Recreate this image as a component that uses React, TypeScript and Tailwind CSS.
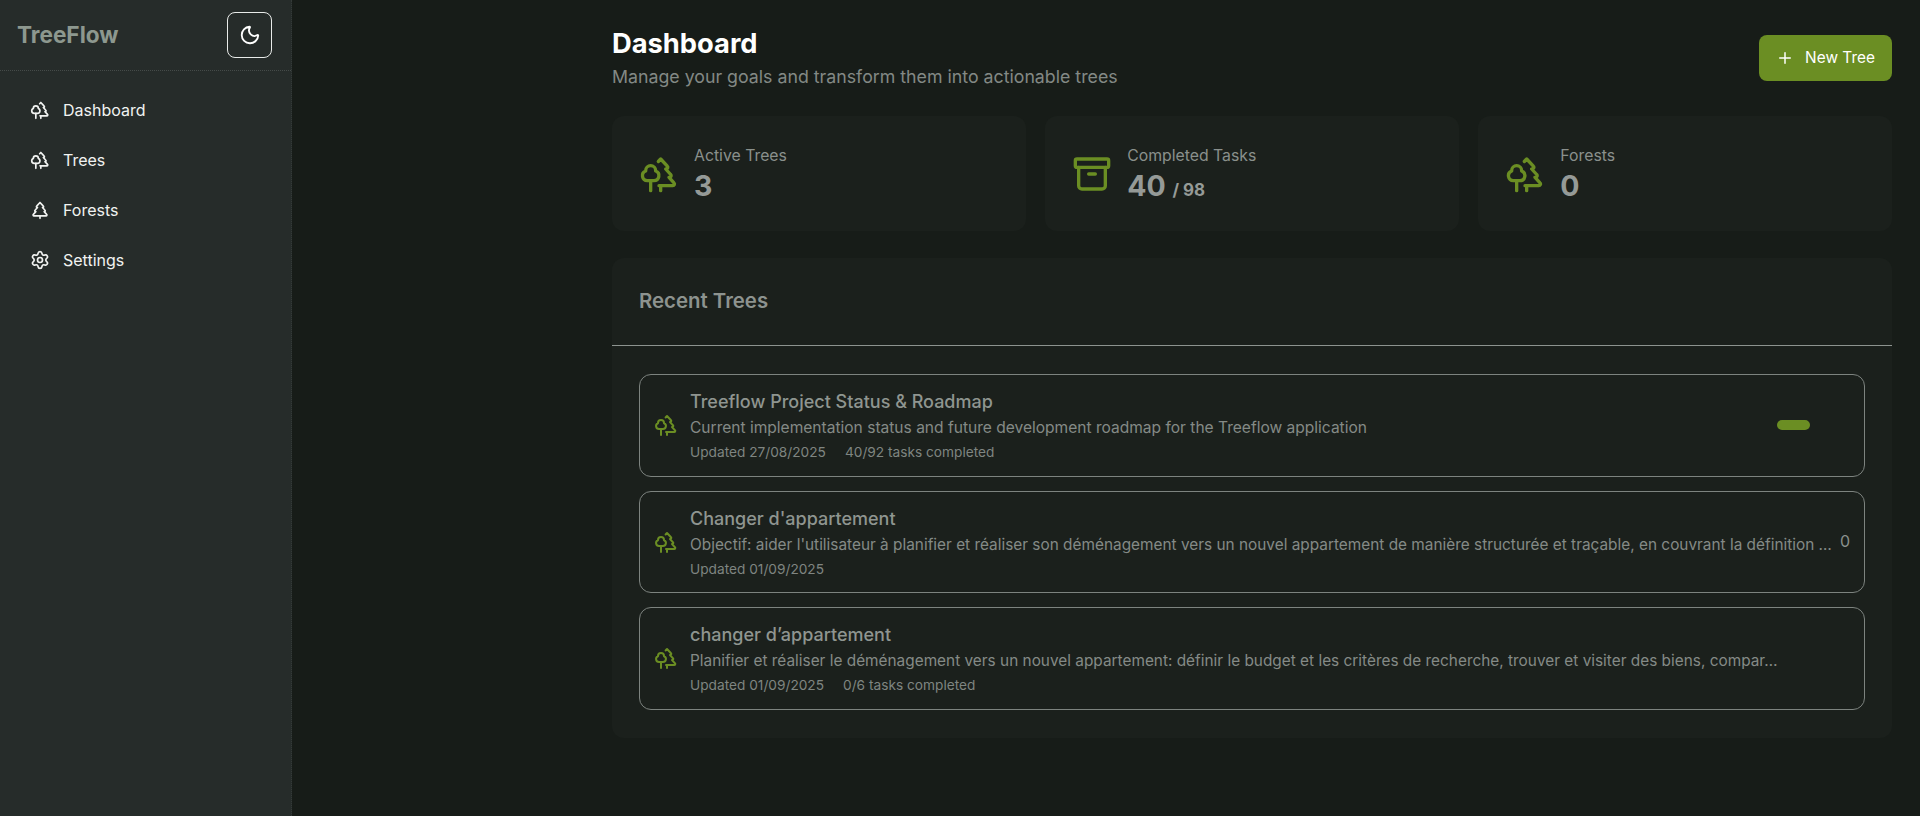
import { Archive, Moon, Plus, Settings, TreePine, Trees } from "lucide-react";
import type { ReactNode } from "react";

const NAV = [
  { label: "Dashboard", icon: <Trees className="size-5" /> },
  { label: "Trees", icon: <Trees className="size-5" /> },
  { label: "Forests", icon: <TreePine className="size-5" /> },
  { label: "Settings", icon: <Settings className="size-5" /> },
];

function StatCard({ icon, label, children }: { icon: ReactNode; label: string; children: ReactNode }) {
  return (
    <div className="flex h-[115px] items-center gap-[15px] rounded-[12px] bg-[#1b201c] px-[27px]">
      <div className="text-[#6b8e23]">{icon}</div>
      <div>
        <p className="text-[15.8px] leading-6 text-[#8a908c]">{label}</p>
        <p className="text-[28.5px] leading-9 font-bold text-[#959a97]">{children}</p>
      </div>
    </div>
  );
}

function TreeRow({
  title,
  description,
  meta,
  right,
  tight,
}: {
  title: string;
  description: string;
  meta: string[];
  right: ReactNode;
  tight?: boolean;
}) {
  return (
    <div className="flex h-[102.5px] items-center rounded-[12px] border border-[#7d837f] px-[14px]">
      <Trees className="mr-[12px] size-6 shrink-0 text-[#6b8e23]" />
      <div className="min-w-0 flex-1 pt-[3px]">
        <p className="truncate text-[18px] leading-[26px] font-medium text-[#8f9590]">{title}</p>
        <p className={tight ? "truncate pt-[1px] text-[15.38px] leading-6 text-[#848a86]" : "truncate pt-[1px] text-[15.55px] leading-6 text-[#848a86]"}>
          {description}
        </p>
        <p className="flex gap-[19px] text-[13.7px] leading-[24px] text-[#7f8581]">
          {meta.map((m) => (
            <span key={m}>{m}</span>
          ))}
        </p>
      </div>
      {right}
    </div>
  );
}

export default function App() {
  return (
    <div className="flex min-h-screen bg-[#171c18] font-['Inter',sans-serif]">
      <aside className="w-[292px] shrink-0 border-r border-dotted border-r-[#343a38] bg-[#262c2a]">
        <div className="flex h-[71px] items-center justify-between border-b border-dotted border-b-[#454b49] pr-[19px] pl-[17px]">
          <span className="text-[22.6px] font-bold text-[#8d988f]">TreeFlow</span>
          <button type="button" className="grid h-[46px] w-[45px] place-items-center rounded-[8px] border border-[#e8ebe9] text-white">
            <Moon className="size-[22px]" />
          </button>
        </div>
        <nav className="flex flex-col gap-[14px] px-[14px] pt-[21px]">
          {NAV.map((n) => (
            <a key={n.label} className="flex h-9 items-center gap-[13px] px-[16px] text-[16px] font-normal text-[#f1f3f1]">
              {n.icon}
              {n.label}
            </a>
          ))}
        </nav>
      </aside>

      <main className="min-w-0 flex-1 pt-[24px] pr-[28px] pl-[320px]">
        <header className="flex h-[68px] items-center justify-between">
          <div>
            <h1 className="text-[27.3px] leading-9 font-bold text-white">Dashboard</h1>
            <p className="mt-[1px] text-[17.75px] leading-7 text-[#838985]">Manage your goals and transform them into actionable trees</p>
          </div>
          <button type="button" className="flex h-[46px] w-[133px] items-center justify-center gap-[11px] rounded-[8px] bg-[#6b8e23] text-[15.4px] font-normal text-white">
            <Plus className="size-[18px]" />
            New Tree
          </button>
        </header>

        <section className="mt-[24px] grid grid-cols-3 gap-[19.5px]">
          <StatCard icon={<Trees className="size-10" />} label="Active Trees">3</StatCard>
          <StatCard icon={<Archive className="size-10" />} label="Completed Tasks">
            40 <span className="text-[17px] leading-none">/ 98</span>
          </StatCard>
          <StatCard icon={<Trees className="size-10" />} label="Forests">0</StatCard>
        </section>

        <section className="mt-[27px] rounded-[12px] bg-[#1b201c]">
          <div className="flex h-[88px] items-center border-b border-[#8d938f] px-[27px]">
            <h2 className="text-[20.4px] font-semibold text-[#8d938f]">Recent Trees</h2>
          </div>
          <div className="flex flex-col gap-[14px] px-[27px] pt-[28px] pb-[28px]">
            <TreeRow
              title="Treeflow Project Status & Roadmap"
              description="Current implementation status and future development roadmap for the Treeflow application"
              meta={["Updated 27/08/2025", "40/92 tasks completed"]}
              right={
                <div className="w-[74px] shrink-0">
                  <div className="ml-[1px] h-[10px] w-[33px] rounded-full bg-[#6b8e23]" />
                </div>
              }
            />
            <TreeRow
              tight
              title="Changer d'appartement"
              description="Objectif: aider l'utilisateur à planifier et réaliser son déménagement vers un nouvel appartement de manière structurée et traçable, en couvrant la définition …"
              meta={["Updated 01/09/2025"]}
              right={<span className="mb-[2px] ml-[5px] shrink-0 text-[16px] text-[#8a908c]">0</span>}
            />
            <TreeRow
              tight
              title="changer d’appartement"
              description="Planifier et réaliser le déménagement vers un nouvel appartement: définir le budget et les critères de recherche, trouver et visiter des biens, compar…"
              meta={["Updated 01/09/2025", "0/6 tasks completed"]}
              right={<div className="w-[60px] shrink-0" />}
            />
          </div>
        </section>
      </main>
    </div>
  );
}
